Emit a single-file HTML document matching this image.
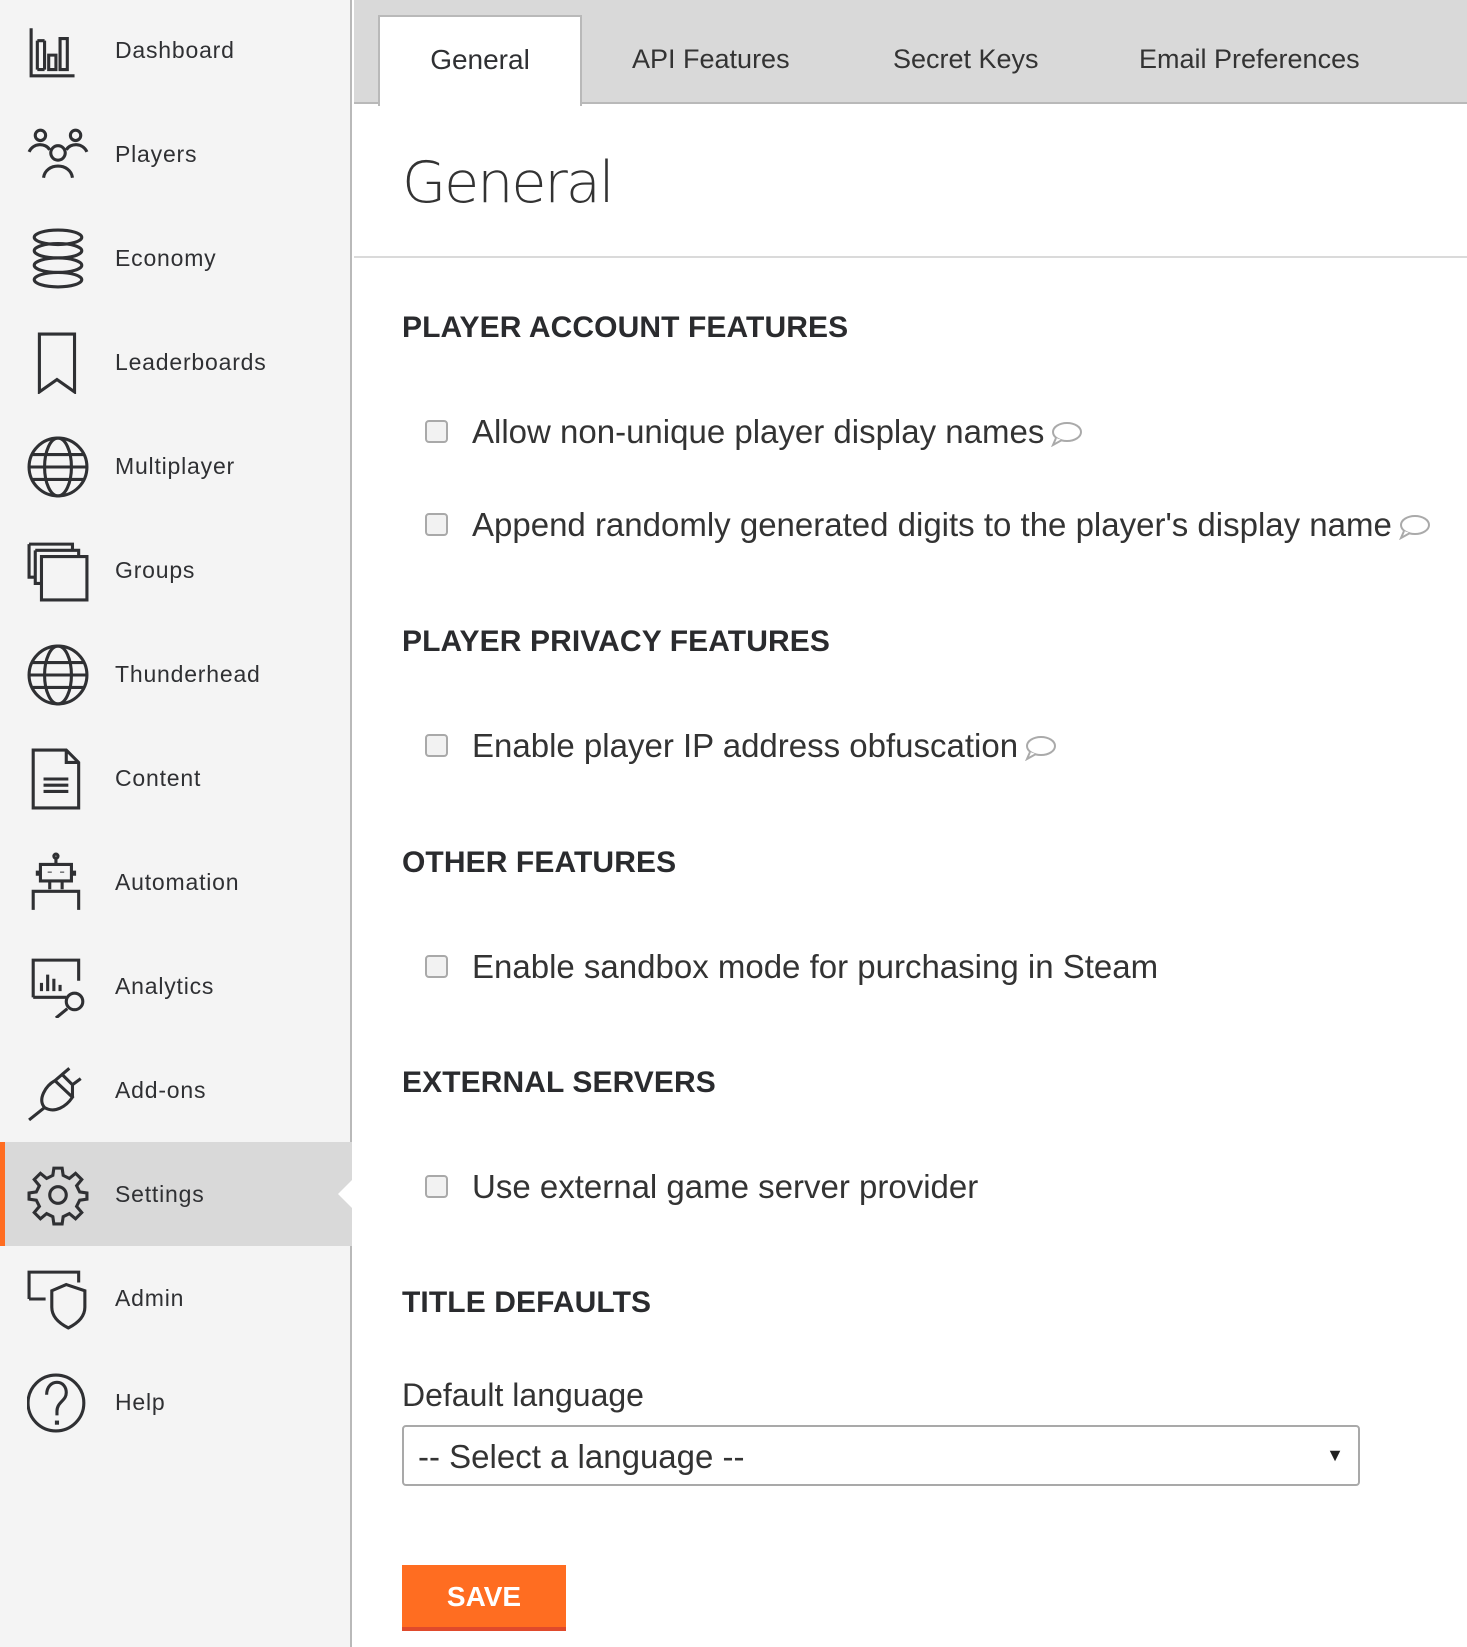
<!DOCTYPE html>
<html><head><meta charset="utf-8"><style>
*{margin:0;padding:0;box-sizing:border-box}
body{width:1467px;height:1647px;overflow:hidden;background:#fff;font-family:"Liberation Sans",sans-serif;color:#2f3033;position:relative}
#side{position:absolute;left:0;top:0;width:352px;height:1647px;background:#f4f4f4;border-right:2px solid #b9b9b9}
.it{position:absolute;left:0;width:350px;height:104px}
.it svg{position:absolute;left:27px;top:22px;width:62px;height:62px;fill:none;stroke:#2f3033;stroke-width:3}
.it span{position:absolute;left:115px;top:38px;font-size:23px;letter-spacing:0.8px;line-height:28px}
.act{background:#d9d9d9;border-left:5px solid #ff6d21;width:352px}
.act svg{left:22px}.act span{left:110px}
.notch{position:absolute;left:338px;top:1180px;width:0;height:0;border-top:14px solid transparent;border-bottom:14px solid transparent;border-right:14px solid #fff}
#tabs{position:absolute;left:354px;top:0;width:1113px;height:104px;background:#d9d9d9;border-bottom:2px solid #b9b9b9}
.tab{position:absolute;top:44px;font-size:27px;color:#333}
#act{position:absolute;left:24px;top:15px;width:204px;height:91px;background:#fff;border:2px solid #b9b9b9;border-bottom:none}
#act span{position:absolute;left:0;right:0;top:27px;text-align:center;font-size:28px}
h1{position:absolute;left:402px;top:150px;font-size:57px;color:#333;font-family:"DejaVu Sans","Liberation Sans",sans-serif;font-weight:200;letter-spacing:-2px}
.hr{position:absolute;left:354px;top:256px;width:1113px;height:2px;background:#dadada}
h2{position:absolute;left:402px;font-size:30px;font-weight:bold;color:#2a2b2e;letter-spacing:0.1px}
.cb{position:absolute;left:425px;width:23px;height:23px;border:2px solid #a9a9a9;border-radius:4px;background:#f2f2f2}
.lb{position:absolute;left:472px;font-size:33px;color:#333;white-space:nowrap}
.lb svg{width:32px;height:26px;vertical-align:-4px;margin-left:6px}
</style></head><body>
<div id="side">
<div class="it" style="top:-2px"><svg viewBox="0 0 60 60"><path d="M4 8V54H46M10 20V48M17 20V48M10 20H17M10 48H17M21 34V48H28V34ZM32 18V48H39V18Z"/></svg><span>Dashboard</span></div>
<div class="it" style="top:102px"><svg viewBox="0 0 60 60"><circle cx="13" cy="11" r="5"/><circle cx="47" cy="11" r="5"/><circle cx="30" cy="28" r="7"/><path d="M2 27C6 18 18 18 22 25M58 27C54 18 42 18 38 25M16 52C18 37 42 37 44 52"/></svg><span>Players</span></div>
<div class="it" style="top:206px"><svg viewBox="0 0 60 60"><ellipse cx="30" cy="9" rx="23" ry="7"/><ellipse cx="30" cy="22" rx="23" ry="7"/><ellipse cx="30" cy="36" rx="23" ry="7"/><ellipse cx="30" cy="50" rx="23" ry="7"/></svg><span>Economy</span></div>
<div class="it" style="top:310px"><svg viewBox="0 0 60 60"><path d="M12 2H46V58L29 46L12 58Z"/></svg><span>Leaderboards</span></div>
<div class="it" style="top:414px"><svg viewBox="0 0 60 60"><circle cx="30" cy="30" r="28"/><ellipse cx="30" cy="30" rx="13" ry="28"/><path d="M2 30H58M5 18H55M5 42H55"/></svg><span>Multiplayer</span></div>
<div class="it" style="top:518px"><svg viewBox="0 0 60 60"><path d="M2 4H44V10M2 4V36H8M8 10H50V16M8 10V42H14M14 16H58V58H14Z"/></svg><span>Groups</span></div>
<div class="it" style="top:622px"><svg viewBox="0 0 60 60"><circle cx="30" cy="30" r="28"/><ellipse cx="30" cy="30" rx="13" ry="28"/><path d="M2 30H58M5 18H55M5 42H55"/></svg><span>Thunderhead</span></div>
<div class="it" style="top:726px"><svg viewBox="0 0 60 60"><path d="M6 2H38L50 14V58H6ZM38 2V14H50M16 30H40M16 36H40M16 42H40"/></svg><span>Content</span></div>
<div class="it" style="top:830px"><svg viewBox="0 0 60 60"><circle cx="28" cy="4" r="2"/><path d="M28 6V12M13 12H43V28H13ZM10 18V23M46 18V23M6 56V38H50V56M22 36V28M34 36V28"/><path d="M22 19V20M34 19V20" stroke-width="4"/></svg><span>Automation</span></div>
<div class="it" style="top:934px"><svg viewBox="0 0 60 60"><path d="M6 40V4H50V24M6 40H38M14 34V26M20 34V18M26 34V22M32 34V28M28 60L39 51"/><circle cx="46" cy="44" r="8"/></svg><span>Analytics</span></div>
<div class="it" style="top:1038px"><svg viewBox="0 0 60 60"><path d="M2 58L17 46M17 46C10 38 18 25 27 20L44 36C38 45 27 52 17 46M34 14L41 8M44 24L52 18M27 20L34 14L44 24L44 36"/></svg><span>Add-ons</span></div>
<div class="it act" style="top:1142px"><svg viewBox="0 0 60 60"><circle cx="30" cy="30" r="8"/><path d="M26 4H34L35 11L41 14L47 9L53 15L48 21L51 27L58 28V34L51 35L48 41L53 47L47 53L41 48L35 51L34 58H26L25 51L19 48L13 53L7 47L12 41L9 35L2 34V28L9 27L12 21L7 15L13 9L19 14L25 11Z"/></svg><span>Settings</span></div>
<div class="it" style="top:1246px"><svg viewBox="0 0 60 60"><path d="M2 30V4H50V14M2 30H18M38 16L56 22V38C56 48 48 54 40 58C32 54 24 48 24 38V22Z"/></svg><span>Admin</span></div>
<div class="it" style="top:1350px"><svg viewBox="0 0 60 60"><circle cx="28" cy="30" r="27"/><path d="M19 22C19 14 24 10 29 10C35 10 38 15 38 20C38 28 29 29 29 38V42"/><path d="M29 47V51" stroke-width="4"/></svg><span>Help</span></div>
</div>
<div class="notch"></div>
<div id="tabs">
<div id="act"><span>General</span></div>
<div class="tab" style="left:278px">API Features</div>
<div class="tab" style="left:539px">Secret Keys</div>
<div class="tab" style="left:785px">Email Preferences</div>
</div>
<h1>General</h1>
<div class="hr"></div>
<h2 style="top:311px">PLAYER ACCOUNT FEATURES</h2>
<div class="cb" style="top:420px"></div><div class="lb" style="top:413px">Allow non-unique player display names<svg viewBox="0 0 32 26"><ellipse cx="17" cy="11" rx="14" ry="9" fill="none" stroke="#aaa" stroke-width="2"/><path d="M6 17L3 24L12 19" fill="#fff" stroke="#aaa" stroke-width="2"/></svg></div>
<div class="cb" style="top:513px"></div><div class="lb" style="top:506px">Append randomly generated digits to the player's display name<svg viewBox="0 0 32 26"><ellipse cx="17" cy="11" rx="14" ry="9" fill="none" stroke="#aaa" stroke-width="2"/><path d="M6 17L3 24L12 19" fill="#fff" stroke="#aaa" stroke-width="2"/></svg></div>
<h2 style="top:625px">PLAYER PRIVACY FEATURES</h2>
<div class="cb" style="top:734px"></div><div class="lb" style="top:727px">Enable player IP address obfuscation<svg viewBox="0 0 32 26"><ellipse cx="17" cy="11" rx="14" ry="9" fill="none" stroke="#aaa" stroke-width="2"/><path d="M6 17L3 24L12 19" fill="#fff" stroke="#aaa" stroke-width="2"/></svg></div>
<h2 style="top:846px">OTHER FEATURES</h2>
<div class="cb" style="top:955px"></div><div class="lb" style="top:948px">Enable sandbox mode for purchasing in Steam</div>
<h2 style="top:1066px">EXTERNAL SERVERS</h2>
<div class="cb" style="top:1175px"></div><div class="lb" style="top:1168px">Use external game server provider</div>
<h2 style="top:1286px">TITLE DEFAULTS</h2>
<div class="lb" style="left:402px;top:1377px;font-size:32px">Default language</div>
<div style="position:absolute;left:402px;top:1425px;width:958px;height:61px;border:2px solid #a9a9a9;border-radius:4px;background:#fff">
<span style="position:absolute;left:14px;top:11px;font-size:33px;color:#333">-- Select a language --</span>
<span style="position:absolute;right:14px;top:18px;font-size:18px;color:#222">▼</span></div>
<div style="position:absolute;left:402px;top:1565px;width:164px;height:66px;background:#ff6d21;border-bottom:4px solid #e04a2c;color:#fff;font-size:28px;font-weight:bold;text-align:center;line-height:64px">SAVE</div>
</body></html>
